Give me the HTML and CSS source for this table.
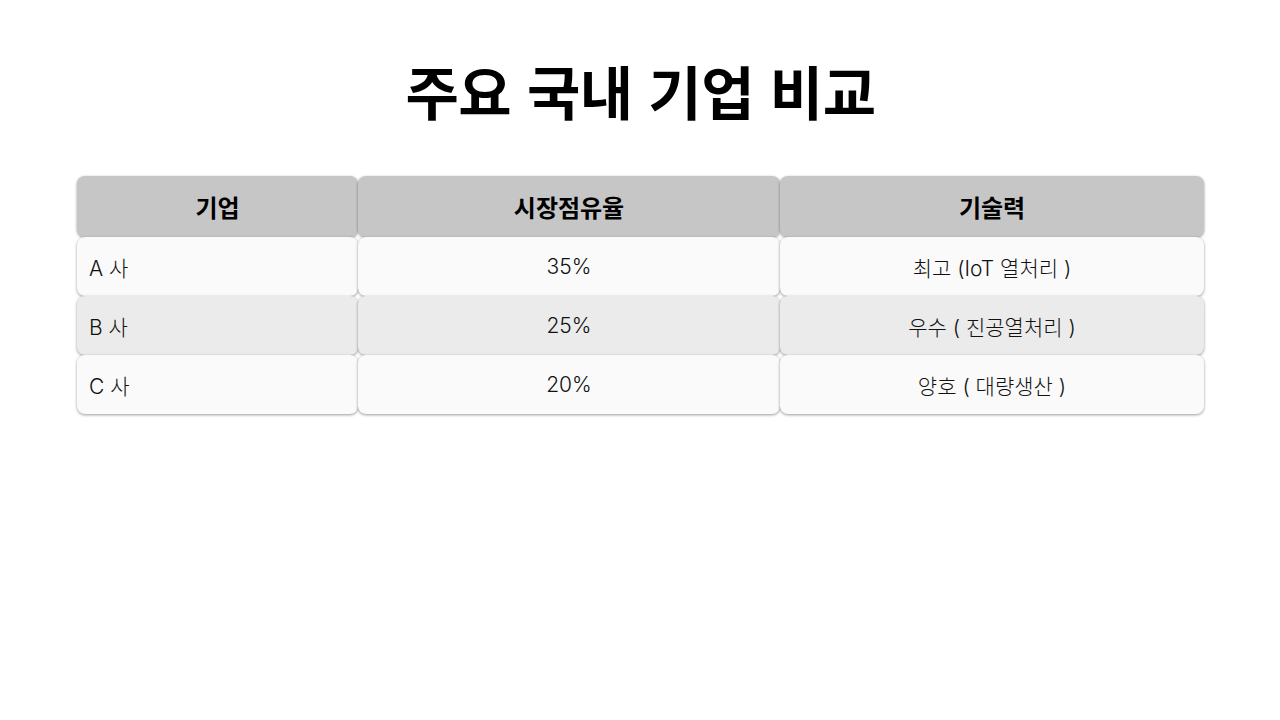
FILE: index.html
```html
<!DOCTYPE html>
<html lang="ko">
<head>
<meta charset="utf-8">
<link rel="stylesheet" href="styles.css">
</head>
<body>
<main class="slide">
  <h1 class="title">주요 국내 기업 비교</h1>
  <div class="table">
    <div class="cell head">기업</div>
    <div class="cell head">시장점유율</div>
    <div class="cell head">기술력</div>

    <div class="cell odd left">A 사</div>
    <div class="cell odd">35%</div>
    <div class="cell odd">최고 (IoT 열처리 )</div>

    <div class="cell even left">B 사</div>
    <div class="cell even">25%</div>
    <div class="cell even">우수 ( 진공열처리 )</div>

    <div class="cell odd left">C 사</div>
    <div class="cell odd">20%</div>
    <div class="cell odd">양호 ( 대량생산 )</div>
  </div>
</main>
</body>
</html>
```

FILE: styles.css
```css
html, body {
  margin: 0;
  padding: 0;
  background: #ffffff;
}
body {
  font-family: Inter, "Noto Sans CJK KR", "Noto Sans", sans-serif;
  color: #000;
}
.slide {
  width: 1280px;
  height: 720px;
  box-sizing: border-box;
  padding: 54px 76px 0 77px;
}
.title {
  margin: 0;
  text-align: center;
  font-family: "Noto Sans CJK KR", sans-serif;
  font-size: 58px;
  font-weight: 700;
  line-height: 72px;
  letter-spacing: -0.5px;
}
.table {
  margin-top: 50px;
  display: grid;
  grid-template-columns: 281px 422px 424px;
  grid-template-rows: 61px 59px 59px 59px;
}
.cell {
  display: flex;
  align-items: center;
  justify-content: center;
  border-radius: 8px;
  box-shadow: 0 1px 3px rgba(0,0,0,0.4);
  font-size: 21px;
  font-weight: 300;
  color: #111;
}
.head {
  background: #c6c6c6;
  font-family: "Noto Sans CJK KR", sans-serif;
  font-weight: 700;
  font-size: 24px;
  color: #000;
}
.odd { background: #fafafa; }
.even { background: #ebebeb; }
.left {
  justify-content: flex-start;
  padding-left: 12px;
}
```
